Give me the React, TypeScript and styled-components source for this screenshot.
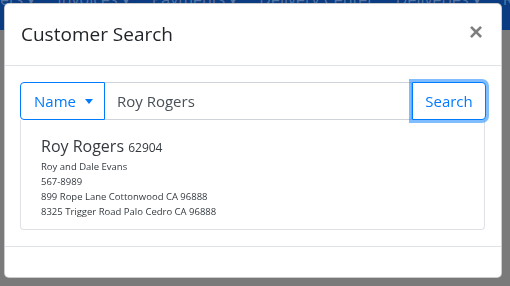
import React from 'react';
import styled, { createGlobalStyle } from 'styled-components';

const GlobalStyle = createGlobalStyle`
  html, body {
    margin: 0;
    padding: 0;
    width: 510px;
    height: 286px;
    overflow: hidden;
    background: #7a7a7a;
    font-family: "Open Sans", "Noto Sans", sans-serif;
  }
`;

const Page = styled.div`
  width: 510px;
  height: 286px;
  background: #7a7a7a;
`;

const Navbar = styled.div`
  height: 30px;
  background: #0b3b80;
  display: flex;
  gap: 22px;
  overflow: hidden;
`;

const NavItem = styled.span`
  margin-top: -12px;
  color: #5676a6;
  font-size: 16px;
  white-space: nowrap;
`;

const Backdrop = styled.div`
  position: fixed;
  inset: 0;
  display: flex;
  justify-content: flex-start;
  padding: 3px 0 0 4px;
`;

const Modal = styled.div`
  width: 498px;
  height: 275px;
  box-sizing: border-box;
  background: #fff;
  border: 1px solid rgba(0, 0, 0, 0.2);
  border-radius: 5px;
  display: flex;
  flex-direction: column;
`;

const Header = styled.div`
  display: flex;
  align-items: flex-start;
  justify-content: space-between;
  padding: 15px 16px 16px 16px;
  border-bottom: 1px solid #dee2e6;
`;

const Title = styled.h5`
  margin: 0;
  font-size: 19px;
  font-weight: 400;
  line-height: 30px;
  color: #212529;
`;

const Close = styled.button`
  border: 0;
  background: transparent;
  padding: 0;
  margin: 1px 2px 0 0;
  font-family: "Liberation Sans", Arial, sans-serif;
  font-size: 24px;
  font-weight: 700;
  line-height: 24px;
  color: #000;
  opacity: 0.5;
`;

const Body = styled.div`
  padding: 16px 15px 16px 15px;
  flex: 1;
  border-bottom: 1px solid #dee2e6;
`;

const InputGroup = styled.div`
  display: flex;
  height: 38px;
`;

const DropButton = styled.button`
  box-sizing: border-box;
  width: 85px;
  height: 38px;
  border: 1px solid #007bff;
  border-radius: 4px 0 0 4px;
  background: #fff;
  color: #007bff;
  font-family: inherit;
  font-size: 15px;
  padding: 0 0 0 13px;
  display: flex;
  align-items: center;
  gap: 9px;
`;

const Caret = styled.span`
  width: 0;
  height: 0;
  border-left: 4px solid transparent;
  border-right: 4px solid transparent;
  border-top: 5px solid #007bff;
  margin-top: 1px;
`;

const SearchInput = styled.input`
  flex: 1;
  box-sizing: border-box;
  height: 38px;
  border: 1px solid #ced4da;
  border-left: 0;
  padding: 0 12px;
  font-family: inherit;
  font-size: 15px;
  color: #495057;
  outline: none;
`;

const SearchButton = styled.button`
  box-sizing: border-box;
  width: 74px;
  height: 38px;
  border: 1px solid #007bff;
  border-radius: 0 4px 4px 0;
  background: #fff;
  color: #007bff;
  font-family: inherit;
  font-size: 15px;
  box-shadow: 0 0 0 3px rgba(0, 123, 255, 0.5);
`;

const Results = styled.div`
  margin-right: 1px;
  border: 1px solid #dee2e6;
  border-top: 0;
  border-radius: 0 0 4px 4px;
  padding: 15px 20px 10px 20px;
`;

const Name = styled.div`
  font-size: 16px;
  line-height: 22px;
  color: #343a40;
`;

const Account = styled.span`
  font-size: 12px;
`;

const Line = styled.div`
  font-size: 9.5px;
  line-height: 15px;
  color: #343a40;
`;

const Footer = styled.div`
  height: 31px;
`;

const navItems = ['ers \u25BE', 'Invoices \u25BE', 'Payments \u25BE', 'Delivery Center', 'Deliveries \u25BE', 'Routes'];

const customer = {
  name: 'Roy Rogers',
  account: '62904',
  lines: [
    'Roy and Dale Evans',
    '567-8989',
    '899 Rope Lane Cottonwood CA 96888',
    '8325 Trigger Road Palo Cedro CA 96888',
  ],
};

export default function App() {
  return (
    <>
      <GlobalStyle />
      <Page>
        <Navbar>
          {navItems.map((n) => (
            <NavItem key={n}>{n}</NavItem>
          ))}
        </Navbar>
      </Page>
      <Backdrop>
        <Modal>
          <Header>
            <Title>Customer Search</Title>
            <Close>&times;</Close>
          </Header>
          <Body>
            <InputGroup>
              <DropButton>
                Name <Caret />
              </DropButton>
              <SearchInput defaultValue="Roy Rogers" />
              <SearchButton>Search</SearchButton>
            </InputGroup>
            <Results>
              <Name>
                {customer.name} <Account>{customer.account}</Account>
              </Name>
              {customer.lines.map((l) => (
                <Line key={l}>{l}</Line>
              ))}
            </Results>
          </Body>
          <Footer />
        </Modal>
      </Backdrop>
    </>
  );
}
